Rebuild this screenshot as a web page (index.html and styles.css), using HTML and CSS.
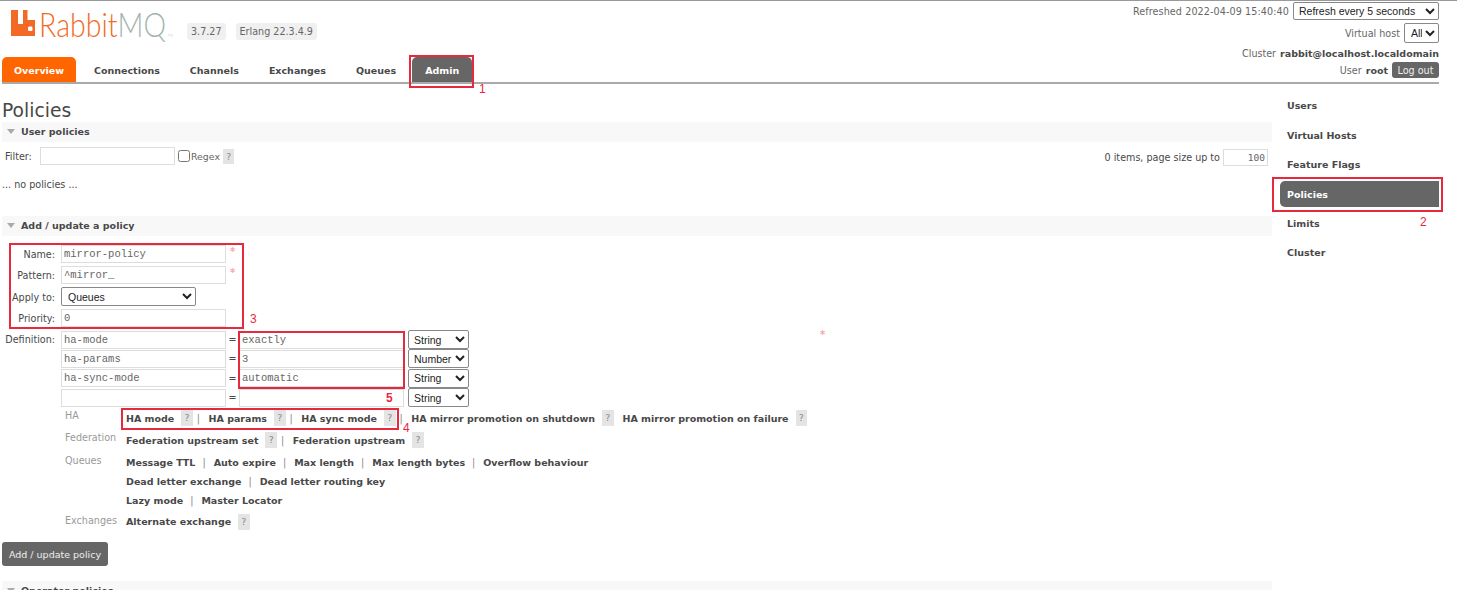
FILE: index.html
```html
<!DOCTYPE html>
<html lang="en">
<head>
<meta charset="utf-8">
<title>RabbitMQ Management</title>
<link rel="stylesheet" href="styles.css">
</head>
<body>
<div class="page">
  <header class="header">
    <div class="brand">
      <div class="logo">
        <svg class="logo-mark" viewBox="0 0 24 26" width="24" height="26"><path fill="#f26a25" fill-rule="evenodd" d="M0 0h7v14h5V0h4.500v10H24v16H0ZM18.200 16.500a1.200 1.200 0 0 0-1.200 1.200v2.100a1.200 1.200 0 0 0 1.200 1.200h2.100a1.200 1.200 0 0 0 1.200-1.200v-2.100a1.200 1.200 0 0 0-1.200-1.200Z"/></svg>
        <span class="logo-text"><span class="logo-rabbit">Rabbit</span><span class="logo-mq">MQ</span><span class="logo-tm">TM</span></span>
      </div>
      <span class="version">3.7.27</span>
      <span class="version">Erlang 22.3.4.9</span>
    </div>
    <div class="status">
      <div class="status-row status-refresh"><span>Refreshed 2022-04-09 15:40:40</span><select class="sel sel-refresh"><option>Refresh every 5 seconds</option></select></div>
      <div class="status-row status-vhost"><span>Virtual host</span><select class="sel sel-vhost"><option>All</option></select></div>
      <div class="status-row status-cluster"><span>Cluster</span><b>rabbit@localhost.localdomain</b></div>
      <div class="status-row status-user"><span>User</span><b>root</b><button class="logout">Log out</button></div>
    </div>
    <nav class="tabs">
      <a class="tab tab-orange">Overview</a>
      <a class="tab">Connections</a>
      <a class="tab">Channels</a>
      <a class="tab">Exchanges</a>
      <a class="tab">Queues</a>
      <a class="tab tab-dark">Admin</a>
    </nav>
  </header>

  <div class="body">
    <main class="main">
      <h1 class="title">Policies</h1>
      <h2 class="bar"><span class="tri"></span>User policies</h2>
      <div class="filter">
        <div class="filter-left">
          <label class="lbl-plain">Filter:</label>
          <input class="inp inp-filter" type="text">
          <input class="check" type="checkbox">
          <span class="regex">Regex</span>
          <span class="help">?</span>
        </div>
        <div class="filter-right">0 items, page size up to <input class="inp inp-page" type="text" value="100"></div>
      </div>
      <p class="none">... no policies ...</p>

      <h2 class="bar bar-add"><span class="tri"></span>Add / update a policy</h2>
      <div class="form">
        <label class="form-l">Name:</label>
        <input class="inp inp-mono" type="text" value="mirror-policy">
        <label class="form-l">Pattern:</label>
        <input class="inp inp-mono" type="text" value="^mirror_">
        <label class="form-l">Apply to:</label>
        <select class="sel sel-apply"><option>Queues</option></select>
        <label class="form-l">Priority:</label>
        <input class="inp inp-mono" type="text" value="0">
        <label class="form-l form-def">Definition:</label>
        <div class="defs">
          <div class="def"><input class="inp inp-mono" type="text" value="ha-mode"><span class="eq">=</span><input class="inp inp-mono" type="text" value="exactly"><select class="sel sel-type"><option>String</option></select></div>
          <div class="def"><input class="inp inp-mono" type="text" value="ha-params"><span class="eq">=</span><input class="inp inp-mono" type="text" value="3"><select class="sel sel-type"><option>Number</option></select></div>
          <div class="def"><input class="inp inp-mono" type="text" value="ha-sync-mode"><span class="eq">=</span><input class="inp inp-mono" type="text" value="automatic"><select class="sel sel-type"><option>String</option></select></div>
          <div class="def"><input class="inp inp-mono" type="text"><span class="eq">=</span><input class="inp inp-mono" type="text"><select class="sel sel-type"><option>String</option></select></div>
        </div>
      </div>

      <div class="shortcuts">
        <span class="sc-label">HA</span>
        <div class="sc-links"><b>HA mode</b><span class="help help-sc">?</span><i>|</i><b>HA params</b><span class="help help-sc">?</span><i>|</i><b>HA sync mode</b><span class="help help-sc">?</span><i>|</i><b>HA mirror promotion on shutdown</b><span class="help help-sc">?</span><b class="gap-b">HA mirror promotion on failure</b><span class="help help-sc">?</span></div>
        <span class="sc-label">Federation</span>
        <div class="sc-links"><b>Federation upstream set</b><span class="help help-sc">?</span><i>|</i><b>Federation upstream</b><span class="help help-sc">?</span></div>
        <span class="sc-label sc-label-ex">Queues</span>
        <div class="sc-stack">
          <div class="sc-links sc-tight"><b>Message TTL</b><i class="wide">|</i><b>Auto expire</b><i class="wide">|</i><b>Max length</b><i class="wide">|</i><b>Max length bytes</b><i class="wide">|</i><b>Overflow behaviour</b></div>
          <div class="sc-links sc-tight"><b>Dead letter exchange</b><i class="wide">|</i><b>Dead letter routing key</b></div>
          <div class="sc-links sc-tight"><b>Lazy mode</b><i class="wide">|</i><b>Master Locator</b></div>
        </div>
        <span class="sc-label sc-label-ex">Exchanges</span>
        <div class="sc-links"><b>Alternate exchange</b><span class="help help-sc">?</span></div>
      </div>

      <button class="submit">Add / update policy</button>
      <h2 class="bar bar-op"><span class="tri"></span>Operator policies</h2>
    </main>

    <aside class="side">
      <a class="side-item">Users</a>
      <a class="side-item">Virtual Hosts</a>
      <a class="side-item">Feature Flags</a>
      <a class="side-item side-active">Policies</a>
      <a class="side-item">Limits</a>
      <a class="side-item">Cluster</a>
    </aside>
  </div>

  <div class="mark mark-admin"></div><span class="num num-1">1</span>
  <div class="mark mark-side"></div><span class="num num-2">2</span>
  <div class="mark mark-form"></div><span class="num num-3">3</span>
  <div class="mark mark-help"></div><span class="num num-4">4</span>
  <div class="mark mark-vals"></div><span class="num num-5">5</span>
  <span class="star star-1">*</span><span class="star star-2">*</span><span class="star star-3">*</span>
</div>
</body>
</html>
```

FILE: styles.css
```css
* { box-sizing: border-box; }
html, body { margin: 0; padding: 0; background: #fff; }
body { font-family: "DejaVu Sans", sans-serif; font-size: 9.6px; color: #484848; overflow: hidden; }
b, .tabs, .side, .bar { font-size: 9.5px; }
.page { position: relative; width: 1457px; height: 590px; overflow: hidden; border-top: 1px solid #999; }

/* header */
.header { position: relative; height: 83px; margin: 0 18px 0 2px; border-bottom: 2px solid #aaa; display: flex; justify-content: space-between; align-items: flex-start; }
.brand { display: flex; align-items: flex-end; height: 39px; padding-left: 9px; }
.logo { display: flex; align-items: flex-start; width: 176px; height: 39px; padding-top: 9px; }
.logo-mark { flex: none; margin-right: 4px; }
.logo-text { display: block; font-family: "Lato", sans-serif; font-weight: 300; font-size: 34px; line-height: 28px; white-space: nowrap; transform: scaleX(.84); transform-origin: left center; }
.logo-rabbit { color: #f26a25; }
.logo-mq { color: #a6b5ae; }
.logo-tm { font-size: 4px; color: #bbb; margin-left: 2px; }
.version { background: #f0f0f0; border-radius: 3px; padding: 0 4px; line-height: 17px; margin-right: 10px; color: #666; }
.status { color: #666; }
.status b { color: #484848; }
.status-row { display: flex; justify-content: flex-end; align-items: center; gap: 4px; white-space: nowrap; }
.status-refresh { height: 20px; letter-spacing: .1px; }
.status-vhost { height: 24px; }
.status-cluster { height: 16px; }
.status-user { height: 18px; }
.sel { font-family: "Liberation Sans", sans-serif; font-size: 10.5px; height: 19px; background: #fff; border: 1px solid #888; border-radius: 2px; color: #222; padding: 0; }
.sel-refresh { width: 146px; padding-left: 1px; height: 18px; }
.sel-vhost { width: 35px; height: 20px; padding-left: 2px; }
.logout { font-family: inherit; font-size: 9.6px; color: #eee; background: #666; border: 0; border-radius: 3px; height: 16px; width: 47px; padding: 0; }
.tabs { position: absolute; left: 0; bottom: 0; display: flex; height: 25px; align-items: stretch; font-weight: bold; }
.tab { display: flex; align-items: center; padding: 1px 15px 0; border-radius: 5px 5px 0 0; color: #484848; }
.tab-orange { background: #f60; color: #fff; width: 74px; padding: 1px 12px 0; margin-right: 3px; }
.tab-dark { background: #666; color: #fff; margin-left: 1px; padding: 1px 13px 0; width: 60px; }

/* body */
.body { display: flex; align-items: flex-start; }
.main { width: 1272px; padding-left: 2px; flex: none; }
.title { font-family: "DejaVu Sans", sans-serif; font-weight: normal; font-size: 18.7px; line-height: 22px; margin: 16px 0 0; color: #484848; }
.bar { display: flex; align-items: center; margin: 0; height: 20px; padding: 0 0 1px 5px; background: #f8f8f8; font-weight: bold; color: #484848; }
.tri { width: 0; height: 0; margin-right: 6px; border-left: 4.5px solid transparent; border-right: 4.5px solid transparent; border-top: 5px solid #aaa; }
.filter { display: flex; justify-content: space-between; align-items: center; height: 24px; margin-top: 2px; padding-right: 4px; }
.filter-left, .filter-right { display: flex; align-items: center; }
.filter-right { gap: 3px; padding-top: 3px; }
.lbl-plain { width: 38px; padding-left: 3px; }
.inp { height: 18px; width: 165px; border: 1px solid #ddd; background: #fff; padding: 0 2px; color: #666; font-size: 10px; outline: 0; border-radius: 0; }
.inp-filter { width: 135px; }
.inp-page { width: 45px; height: 17px; text-align: right; font-family: "DejaVu Sans Mono", monospace; font-size: 9.5px; }
.inp-mono { font-family: "Liberation Mono", "DejaVu Sans Mono", monospace; font-size: 10.5px; padding-left: 2px; }
.check { width: 12px; height: 12px; margin: 0 1px 0 3px; }
.regex { margin-right: 3px; color: #666; font-size: 9.4px; }
.help { display: inline-block; width: 11.5px; height: 15px; line-height: 15px; background: #e4e4e4; color: #888; text-align: center; font-size: 9.5px; font-weight: normal; }
.none { margin: 10px 0 0; line-height: 14px; }
.bar-add { margin-top: 24px; }
.form { display: grid; grid-template-columns: 53px 1fr; column-gap: 6px; row-gap: 3px; margin-top: 9px; justify-items: start; align-items: center; }
.form-l { justify-self: end; line-height: 16px; padding-top: 2px; color: #484848; }
.form-def { align-self: start; }
.sel-apply { width: 135px; height: 19px; padding-left: 2px; }
.defs { display: flex; flex-direction: column; }
.def { display: flex; align-items: center; height: 19.33px; }
.eq { width: 13px; text-align: center; }
.sel-type { width: 61px; height: 19px; margin-left: 4px; padding-left: 1px; }

.shortcuts { display: grid; grid-template-columns: 61px 1fr; margin: 0 0 0 63px; align-items: start; }
.sc-label { color: #999; line-height: 14px; padding-top: 2px; }
.sc-label-ex { padding-top: 3px; }
.sc-links { display: flex; align-items: center; height: 22px; white-space: nowrap; }
.sc-links b { font-weight: bold; color: #484848; }
.sc-links i { font-style: normal; color: #888; padding: 0 8.5px 0 4px; }
.sc-links i.wide { padding: 0 8px 0 7px; }
.sc-tight { height: 19px; }
.sc-stack { display: flex; flex-direction: column; padding: 1.5px 0 1px; }
.help-sc { margin-left: 7px; height: 16px; line-height: 16px; }
.gap-b { margin-left: 9px; }
.submit { display: block; margin-top: 9.5px; width: 106px; height: 24px; background: #666; color: #eee; border: 0; border-radius: 3px; font-family: inherit; font-size: 9.5px; padding: 0; }
.bar-op { margin-top: 15px; }

.side { margin-left: 8px; width: 159px; flex: none; padding-top: 7px; font-weight: bold; display: flex; flex-direction: column; }
.side-item { height: 29.4px; padding-left: 7px; display: flex; align-items: center; color: #484848; }
.side-active { background: #666; color: #fff; border-radius: 5px 0 0 5px; height: 26px; margin: 2px 0 1.4px; }

/* annotation overlay */
.mark { position: absolute; border: 2px solid #e8283c; }
.mark-admin { left: 409px; top: 54px; width: 65px; height: 33px; }
.mark-side { left: 1272px; top: 176px; width: 171px; height: 35px; }
.mark-form { left: 9px; top: 242px; width: 235px; height: 86px; }
.mark-vals { left: 238px; top: 330px; width: 167px; height: 58px; }
.mark-help { left: 121px; top: 407px; width: 278px; height: 22px; }
.num { position: absolute; color: #e8283c; font-family: "Liberation Sans", sans-serif; font-size: 12px; line-height: 14px; }
.num-1 { left: 479px; top: 81px; }
.num-2 { left: 1420px; top: 214px; }
.num-3 { left: 250px; top: 311px; }
.num-4 { left: 403px; top: 420px; }
.num-5 { left: 386px; top: 390px; font-weight: bold; }
.star { position: absolute; color: #f7a6ae; font-size: 10px; line-height: 10px; font-weight: bold; }
.star-1 { left: 230px; top: 246px; }
.star-2 { left: 230px; top: 267px; }
.star-3 { left: 820px; top: 329px; }
```
